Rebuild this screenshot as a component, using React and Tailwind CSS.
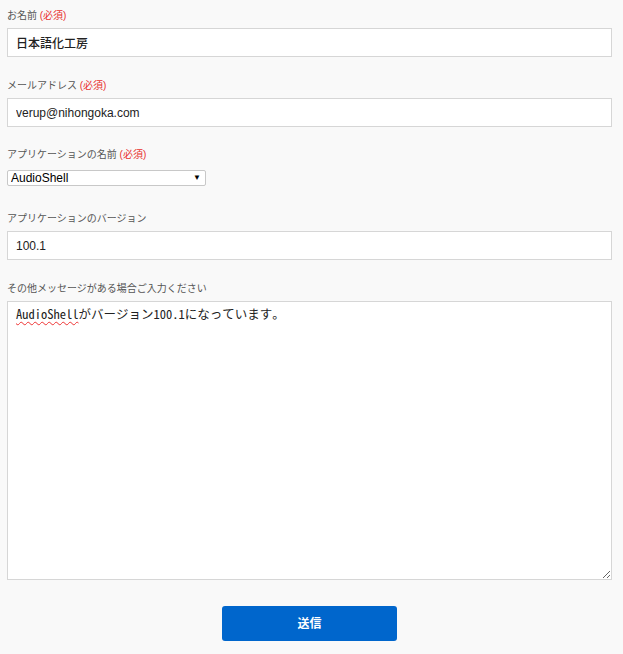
import React, { useState } from 'react';

// --- form fields ---
const labelCls = "block text-[10px] leading-[14px] text-[#555] mb-[5px]";
const inputCls = "block w-full h-[29px] bg-white border border-[#d6d6d6] px-[8px] text-[12px] font-medium text-[#222] outline-none";

function Req() {
  return <span className="text-[#e8322f]"> (必須)</span>;
}

export default function App() {
  const [name, setName] = useState('日本語化工房');
  const [email, setEmail] = useState('verup@nihongoka.com');
  const [app, setApp] = useState('AudioShell');
  const [version, setVersion] = useState('100.1');

  return (
    <div className="min-h-screen w-full bg-[#f9f9f9] pl-[7px] pr-[11px] pt-[9px] pb-[13px] font-['Liberation_Sans','Noto_Sans_CJK_JP',sans-serif]">
      <form onSubmit={e => e.preventDefault()} className="flex flex-col">
        <label className={labelCls}>お名前<Req /></label>
        <input className={inputCls} value={name} onChange={e => setName(e.target.value)} />

        <label className={labelCls + " mt-[22px]"}>メールアドレス<Req /></label>
        <input className={inputCls} value={email} onChange={e => setEmail(e.target.value)} />

        <label className={labelCls + " mt-[21px]"}>アプリケーションの名前<Req /></label>
        <div className="relative w-[199px] mt-[3px]">
          <select value={app} onChange={e => setApp(e.target.value)} className="block w-full h-[16px] appearance-none bg-white border border-[#c8c8c8] rounded-[2px] pl-[3px] text-[12px] leading-[14px] text-black outline-none">
            <option>AudioShell</option>
          </select>
          <span className="pointer-events-none absolute right-[5px] top-[3px] text-[8px] leading-[10px] text-black">▼</span>
        </div>

        <label className={labelCls + " mt-[26px]"}>アプリケーションのバージョン</label>
        <input className={inputCls} value={version} onChange={e => setVersion(e.target.value)} />

        <label className={labelCls + " mt-[22px]"}>その他メッセージがある場合ご入力ください</label>
        <div className="w-full h-[279px] bg-white border border-[#d6d6d6] px-[8px] pt-[2px] text-[12.5px] leading-[20px] text-[#222] font-['Noto_Sans_Mono_CJK_JP','Liberation_Mono','Noto_Sans_CJK_JP',monospace] resize-y overflow-auto">
          <span className="underline decoration-wavy decoration-[#e33] decoration-1 underline-offset-2">AudioShell</span>がバージョン100.1になっています。
        </div>

        <button className="mt-[26px] mx-auto w-[175px] h-[35px] bg-[#0066cc] rounded-[3px] text-white text-[12px] font-bold">送信</button>
      </form>
    </div>
  );
}
